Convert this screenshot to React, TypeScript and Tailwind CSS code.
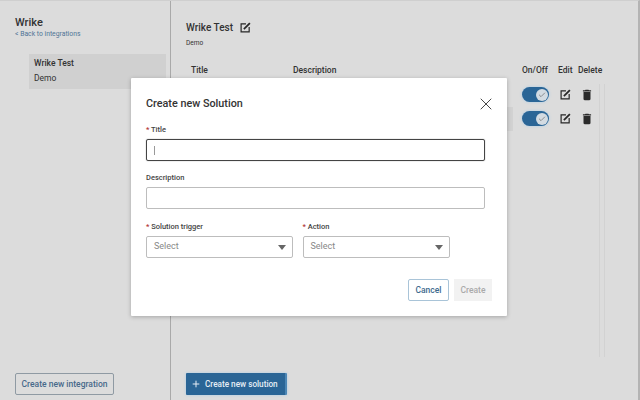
import { Check, Plus, X } from 'lucide-react';
import { MdDelete } from 'react-icons/md';

function EditIcon({ size }: { size: number }) {
  return (
    <svg width={size} height={size} viewBox="0 0 12 12" fill="none" stroke="#262626" className="shrink-0">
      <path d="M6.5 2H1.2v8.8H10V5.5" strokeWidth="1.3" />
      <path d="M4.2 7.8 10.8 1.2" strokeWidth="1.9" />
    </svg>
  );
}

function Toggle() {
  return (
    <div className="flex h-[15px] w-[27px] items-center justify-end rounded-full bg-[#2a6596] pr-[1px] shadow-[0_0_3px_#a9cbe6]">
      <div className="flex h-[12px] w-[12px] items-center justify-center rounded-full bg-[#d3dbe2]">
        <Check size={8} className="text-[#666]" />
      </div>
    </div>
  );
}

function Field({ label, required, width, children }: { label: string; required?: boolean; width: string; children: React.ReactNode }) {
  return (
    <div className={width}>
      <p className="h-[12px] text-[7.5px] leading-[12px] font-medium text-[#444]">
        {required && <span className="text-[#b03030]">* </span>}
        {label}
      </p>
      {children}
    </div>
  );
}

function SelectBox() {
  return (
    <div className="mt-[3px] flex h-[22px] items-center justify-between rounded-[2px] border border-[#bdbdbd] bg-white pr-[6px] pl-[7px] text-[9px] text-[#888]">
      Select
      <div className="h-0 w-0 border-x-[4px] border-t-[5px] border-x-transparent border-t-[#666]" />
    </div>
  );
}

export default function App() {
  return (
    <div className="relative flex h-[400px] w-[640px] overflow-hidden border-t border-r-2 border-[#b4b4b4] border-t-[#cfcfcf] bg-[#dcdcdc] font-['Roboto',sans-serif] text-[#333]">
      {/* Sidebar */}
      <div className="flex w-[171px] shrink-0 flex-col border-r border-[#a9a9a9] pt-[15px] pb-[4px]">
        <div className="pl-[15px]">
          <h1 className="text-[11px] leading-[13px] font-medium text-[#333]">Wrike</h1>
          <a className="block text-[6.8px] leading-[10px] text-[#4f7596]">&lt; Back to integrations</a>
        </div>
        <div className="mt-[15px] ml-[29px] h-[35px] w-[137px] bg-[#d0d0d0] pt-[2px] pl-[5px] text-[8.5px] leading-[15px]">
          <p className="font-medium">Wrike Test</p>
          <p>Demo</p>
        </div>
        <button className="mt-auto mb-[1px] ml-[15px] h-[22px] w-[99px] rounded-[2px] border border-[#8f9aa3] text-[8.5px] font-medium text-[#47698a]">
          Create new integration
        </button>
      </div>

      {/* Main */}
      <div className="flex min-h-0 min-w-0 flex-1 flex-col pt-[20px] pb-[5px] pl-[15px]">
        <div className="flex items-center gap-[7px]">
          <h2 className="text-[10px] leading-[13px] font-medium">Wrike Test</h2>
          <EditIcon size={11} />
        </div>
        <p className="mt-[4px] text-[6.5px] leading-[10px]">Demo</p>

        <div className="mt-[16px] flex h-[12px] items-center text-[8.5px] font-medium">
          <span className="ml-[5px] w-[102px]">Title</span>
          <span className="w-[229px]">Description</span>
          <span className="w-[36px]">On/Off</span>
          <span className="w-[20px]">Edit</span>
          <span>Delete</span>
        </div>

        <div className="flex min-h-0 flex-1 pt-[11px]">
          <div className="ml-[336px] flex flex-col gap-[9px]">
            {[0, 1].map((i) => (
              <div key={i} className="flex h-[15px] items-center">
                <Toggle />
                <div className="ml-[11px]">
                  <EditIcon size={11} />
                </div>
                <MdDelete size={14} className="ml-[9px] text-[#2b2b2b]" />
              </div>
            ))}
          </div>
          <div className="mt-[-3px] ml-[5px] h-[273px] w-[6px] border-x border-[#d2d2d2]" />
        </div>

        <button className="flex h-[22px] w-[101px] shrink-0 items-center gap-[4px] rounded-[1px] border-r-2 border-[#4b86b5] bg-[#2a6596] pl-[5px] text-[8.2px] font-medium text-[#e6eef5] shadow-[0_0_3px_#a9cbe6]">
          <Plus size={10} strokeWidth={2.4} />
          Create new solution
        </button>
      </div>

      {/* Row peeking out from behind the modal */}
      <div className="absolute top-[106px] left-[507px] h-[24px] w-[6px] bg-[#d2d2d2]" />

      {/* Modal */}
      <div className="absolute top-[77px] left-[131px] h-[238px] w-[376px] rounded-[1px] bg-white px-[15px] pt-[19px] shadow-[0_1px_4px_rgba(0,0,0,0.25)]">
        <div className="flex h-[14px] items-center justify-between">
          <h3 className="text-[10.8px] font-medium text-[#333]">Create new Solution</h3>
          <X size={20} strokeWidth={1} className="-mr-[4px] text-[#222]" />
        </div>
        <div className="mt-[13px]">
          <Field label="Title" required width="w-[339px]">
            <div className="mt-[3px] flex h-[22px] items-center rounded-[2px] border border-[#444] pl-[7px] shadow-[0_0_1px_#666]">
              <div className="h-[9px] w-px bg-[#999]" />
            </div>
          </Field>
        </div>
        <div className="mt-[11px]">
          <Field label="Description" width="w-[339px]">
            <div className="mt-[3px] h-[22px] rounded-[2px] border border-[#bdbdbd]" />
          </Field>
        </div>
        <div className="mt-[12px] flex gap-[9.5px]">
          <Field label="Solution trigger" required width="w-[147px]">
            <SelectBox />
          </Field>
          <Field label="Action" required width="w-[147px]">
            <SelectBox />
          </Field>
        </div>
        <div className="mt-[21px] flex justify-end gap-[5px]">
          <button className="h-[22px] w-[41px] rounded-[2px] border border-[#a9c4d8] text-[8.5px] font-medium text-[#3d6a8e]">
            Cancel
          </button>
          <button className="h-[22px] w-[38px] bg-[#f2f2f2] text-[8.5px] font-medium text-[#aaa]">Create</button>
        </div>
      </div>
    </div>
  );
}
